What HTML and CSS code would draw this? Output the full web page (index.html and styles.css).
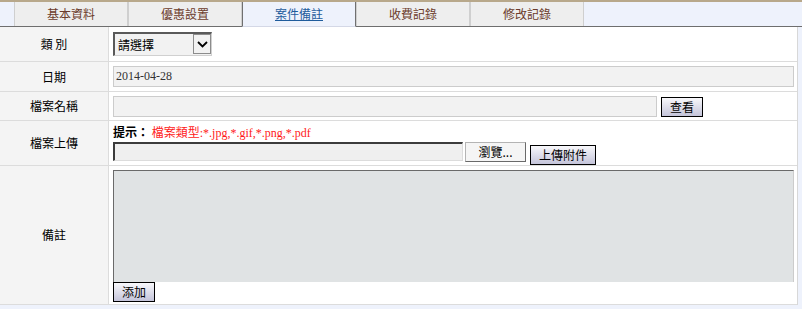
FILE: index.html
```html
<!DOCTYPE html>
<html lang="zh-Hant">
<head>
  <meta charset="UTF-8">
  <title>案件備註</title>
  <link rel="stylesheet" href="styles.css">
</head>
<body>
  <div class="topline"></div>
  <div class="tabs">
    <a class="tab">基本資料</a>
    <a class="tab">優惠設置</a>
    <a class="tab active">案件備註</a>
    <a class="tab">收費記錄</a>
    <a class="tab">修改記錄</a>
  </div>

  <div class="form">
    <div class="row row-type">
      <div class="label">類 別</div>
      <div class="field">
        <span class="select-wrap">
          <select class="select">
            <option>請選擇</option>
          </select>
          <span class="select-arrow">
            <svg width="11" height="7" viewBox="0 0 11 7"><path d="M1 1 L5.5 5.5 L10 1" fill="none" stroke="#000" stroke-width="1.8"/></svg>
          </span>
        </span>
      </div>
    </div>

    <div class="row row-date">
      <div class="label">日期</div>
      <div class="field">
        <input class="text full" type="text" value="2014-04-28" readonly>
      </div>
    </div>

    <div class="row row-name">
      <div class="label">檔案名稱</div>
      <div class="field">
        <input class="text name" type="text" readonly>
        <button class="btn btn-view">查看</button>
      </div>
    </div>

    <div class="row row-upload">
      <div class="label">檔案上傳</div>
      <div class="field field-upload">
        <div class="hint"><b>提示：</b> <span class="hint-red">檔案類型:*.jpg,*.gif,*.png,*.pdf</span></div>
        <div class="file-line">
          <input class="file-box" type="text" readonly>
          <button class="browse">瀏覽...</button>
          <button class="btn btn-upload">上傳附件</button>
        </div>
      </div>
    </div>

    <div class="row row-note">
      <div class="label">備註</div>
      <div class="field field-note">
        <textarea class="note"></textarea>
        <button class="btn btn-add">添加</button>
      </div>
    </div>
  </div>
</body>
</html>
```

FILE: styles.css
```css
body {
  margin: 0;
  padding: 0;
  background-color: #eef2fc;
  font-family: "Noto Sans CJK TC", "Liberation Sans", sans-serif;
  font-size: 12px;
  color: #000;
}
.topline {
  height: 2px;
  background-color: #b8a88b;
}
.tabs {
  display: flex;
  height: 24px;
  padding-left: 14px;
  border-bottom: 1px solid #6e6e6e;
}
.tab {
  width: 112px;
  display: flex;
  align-items: center;
  justify-content: center;
  background-color: #eeeeee;
  border-left: 1px solid #cfcfcf;
  border-right: 1px solid #cfcfcf;
  color: #6b3b2b;
  font-size: 12px;
  line-height: 1;
}
.tab.active {
  background-color: #eef2fc;
  border-left-color: #707070;
  border-right-color: #707070;
  color: #1f5c9c;
  text-decoration: underline;
  margin-bottom: -1px;
  border-bottom: 1px solid #d4d8e6;
}
.form {
  width: 797px;
  background-color: #fff;
  border-right: 1px solid #d8d8d8;
}
.row {
  display: flex;
  border-bottom: 1px solid #dcdcdc;
}
.row-type { height: 34px; }
.row-date { height: 29px; }
.row-name { height: 28px; }
.row-upload { height: 44px; }
.row-note { height: 138px; }
.label {
  width: 108px;
  flex: none;
  background-color: #f4f4f4;
  border-right: 1px solid #dcdcdc;
  display: flex;
  align-items: center;
  justify-content: center;
  line-height: 1;
}
.field {
  flex: 1;
  display: flex;
  align-items: center;
  padding: 0 3px 0 4px;
}
.select-wrap {
  position: relative;
  display: inline-block;
}
.select {
  appearance: none;
  width: 99px;
  height: 24px;
  margin: 0;
  padding: 0 0 0 3px;
  border-style: solid;
  border-width: 2px 1px 1px 2px;
  border-color: #5a5a5a #d0d0d0 #d0d0d0 #5a5a5a;
  background-color: #f2f2f2;
  font-family: "Noto Sans CJK TC", sans-serif;
  font-size: 12px;
  color: #000;
  outline: none;
}
.select-arrow {
  position: absolute;
  top: 2px;
  right: 1px;
  width: 18px;
  height: 20px;
  border: 1px solid #8c8c8c;
  box-sizing: border-box;
  background-color: #f2f2f2;
  display: flex;
  align-items: center;
  justify-content: center;
}
.text {
  box-sizing: border-box;
  height: 21px;
  margin: 0;
  padding: 0 2px;
  border: 1px solid #cccccc;
  background-color: #f2f2f2;
  font-family: "Liberation Serif", serif;
  font-size: 12px;
  color: #333;
}
.text.full { width: 681px; }
.text.name { width: 544px; }
.btn {
  box-sizing: border-box;
  margin: 0;
  padding: 0;
  border: 1px solid #000;
  background: linear-gradient(#f8f8fb, #c4c4da);
  font-family: "Noto Sans CJK TC", sans-serif;
  font-size: 12px;
  line-height: 1;
  color: #000;
}
.btn-view {
  width: 42px;
  height: 20px;
  margin-left: 4px;
  margin-top: 2px;
}
.field-upload {
  flex-direction: column;
  align-items: flex-start;
  justify-content: flex-start;
  padding-top: 3px;
}
.hint {
  height: 15px;
  line-height: 15px;
  font-size: 12px;
}
.hint b { font-weight: bold; }
.hint-red {
  color: #ff1a1a;
  font-family: "Liberation Serif", "Noto Sans CJK TC", serif;
}
.file-line {
  display: flex;
  align-items: flex-start;
  margin-top: 3px;
}
.file-box {
  box-sizing: border-box;
  width: 350px;
  height: 19px;
  margin: 0;
  border-style: solid;
  border-width: 2px 1px 1px 2px;
  border-color: #3c3c3c #dcdcdc #dcdcdc #3c3c3c;
  background-color: #efefef;
}
.browse {
  box-sizing: border-box;
  width: 61px;
  height: 20px;
  margin: 0 0 0 2px;
  padding: 0;
  border: 1px solid #b4b4b4;
  border-right-color: #6a6a6a;
  border-bottom-color: #6a6a6a;
  background-color: #f5f5f5;
  font-family: "Noto Sans CJK TC", sans-serif;
  font-size: 12px;
  line-height: 1;
}
.btn-upload {
  width: 66px;
  height: 20px;
  margin-left: 4px;
  margin-top: 3px;
}
.field-note {
  flex-direction: column;
  align-items: flex-start;
  justify-content: flex-start;
  padding-top: 4px;
}
.note {
  box-sizing: border-box;
  width: 681px;
  height: 112px;
  margin: 0;
  padding: 0;
  resize: none;
  overflow-y: scroll;
  border-style: solid;
  border-width: 1px 1px 0 1px;
  border-color: #6a6a6a #cccccc #cccccc #6a6a6a;
  background-color: #e0e3e4;
  outline: none;
}
.note::-webkit-scrollbar {
  width: 17px;
}
.note::-webkit-scrollbar-track {
  background-color: #f7f5ec;
}
.btn-add {
  width: 42px;
  height: 20px;
}
```
